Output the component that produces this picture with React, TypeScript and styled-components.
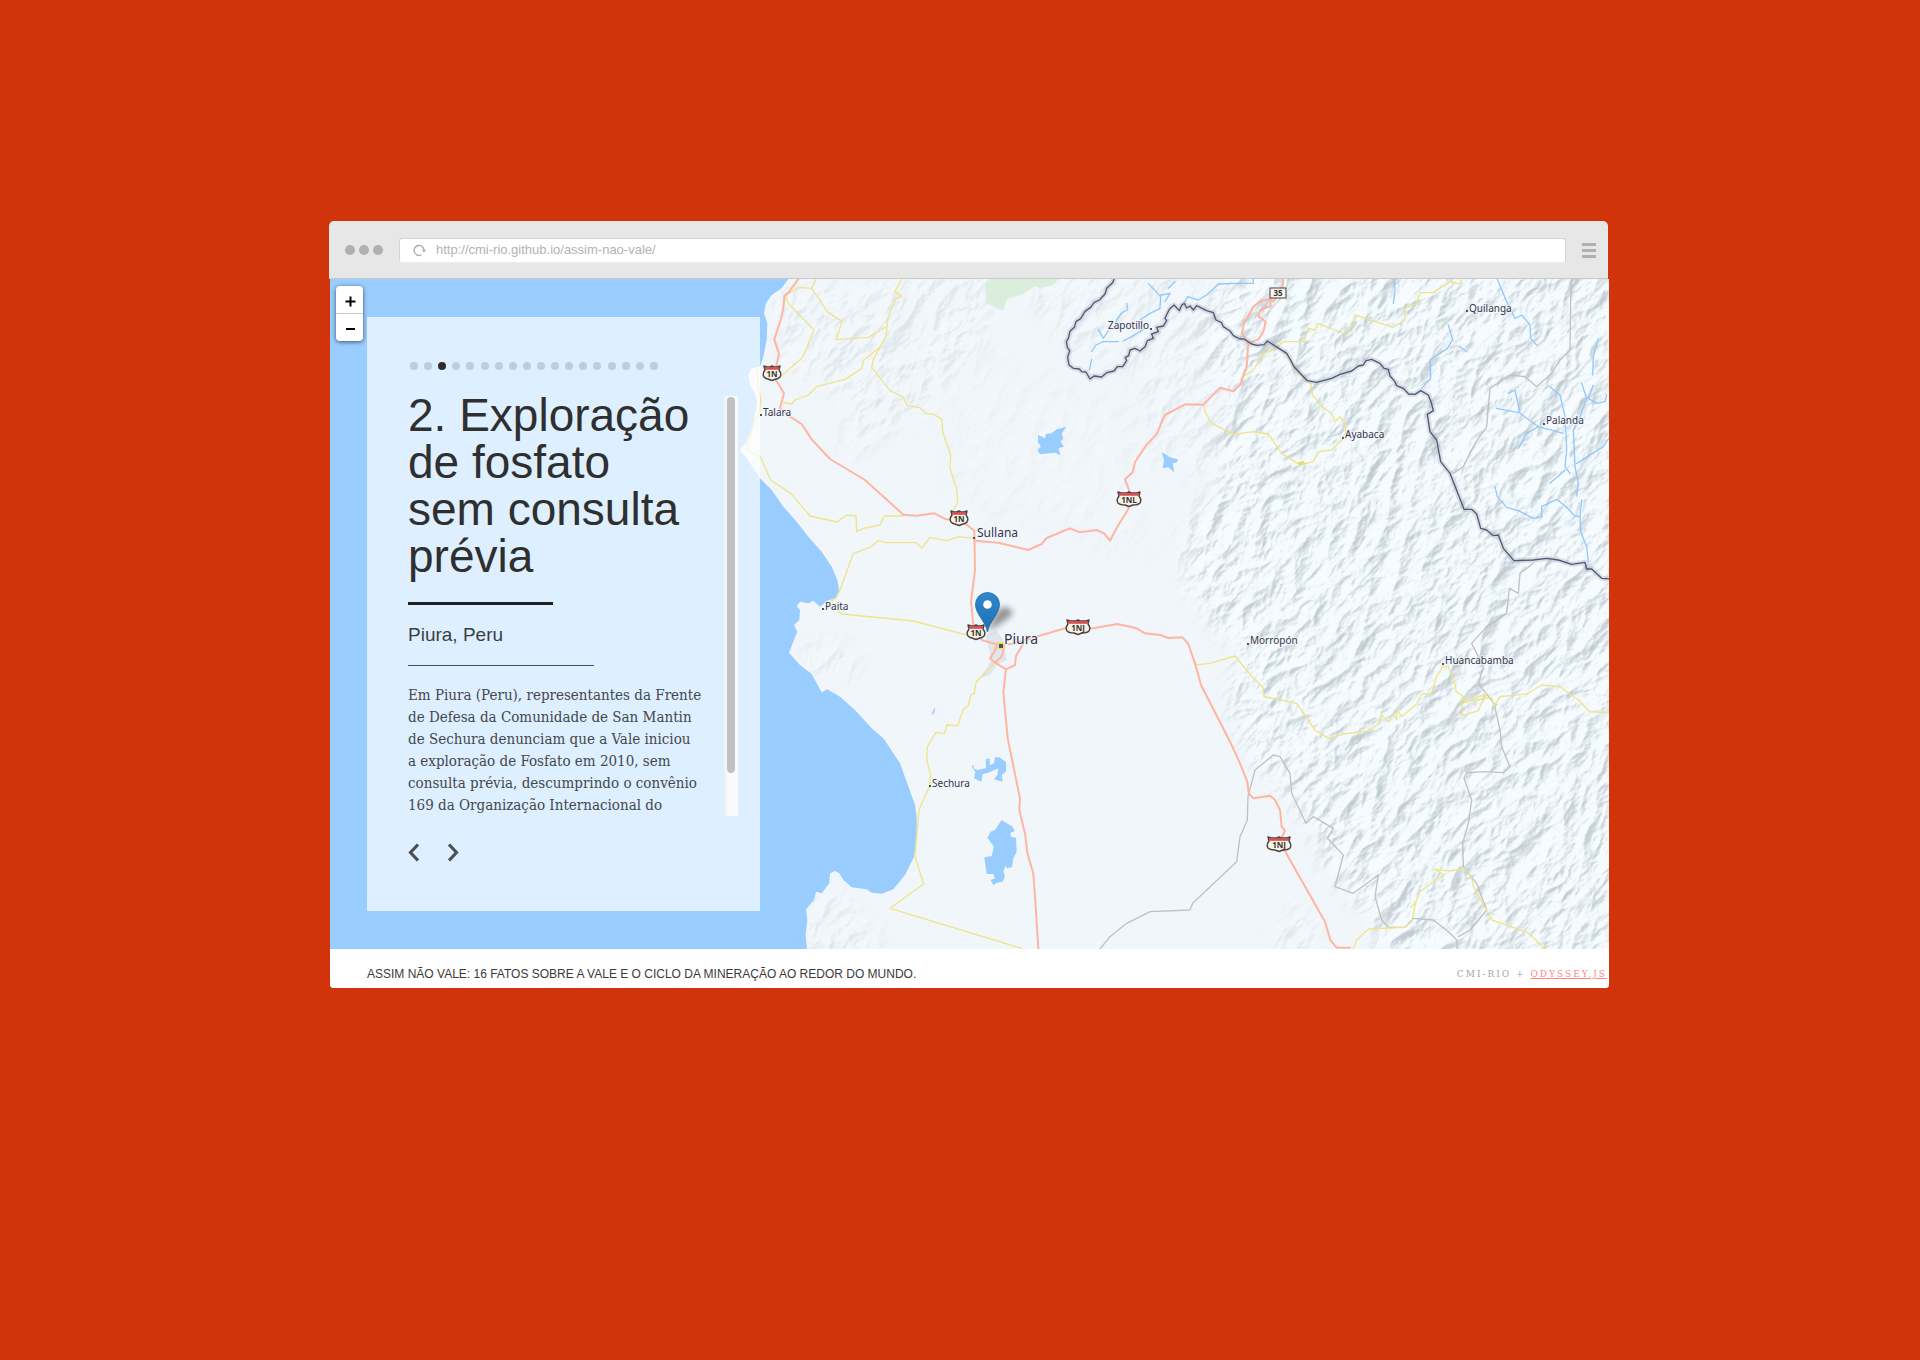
import React from "react";
import styled, { createGlobalStyle } from "styled-components";

const sans = `"Liberation Sans", Arial, Helvetica, sans-serif`;
const slab = `"DejaVu Serif Condensed", "DejaVu Serif", serif`;

const GlobalStyle = createGlobalStyle`
  * { box-sizing: border-box; }
  body { margin: 0; background: #d1330a; font-family: ${sans}; }
  button { padding: 0; border: 0; background: none; cursor: pointer; }
`;

const Stage = styled.main`
  min-height: 100vh;
  padding: 221px 311px 0 329px;
  background: #d1330a;
`;

const Browser = styled.section`
  display: flex;
  flex-direction: column;
`;

const Toolbar = styled.header`
  display: flex;
  align-items: center;
  gap: 16px;
  height: 58px;
  margin-right: 1px;
  padding: 1px 12px 0 16px;
  background: #e7e7e7;
  border-bottom: 1px solid #c9c9c9;
  border-radius: 5px 5px 0 0;
`;

const WindowDots = styled.div`
  display: flex;
  gap: 4px;
`;

const WindowDot = styled.span`
  width: 10px;
  height: 10px;
  border-radius: 50%;
  background: #b0b0b0;
`;

const AddressBar = styled.form`
  display: flex;
  flex: 1;
  align-items: center;
  gap: 10px;
  height: 25px;
  padding: 0 13px;
  background: #fff;
  border: 1px solid #d4d4d4;
  border-bottom-color: #ececec;
  border-radius: 3px;
`;

const IconButton = styled.button`
  display: flex;
  flex: none;
`;

const AddressInput = styled.input`
  flex: 1;
  min-width: 0;
  padding: 0;
  border: 0;
  outline: 0;
  background: none;
  color: #b2b2b2;
  font: 13px/20px ${sans};
`;

const Page = styled.div`
  margin-left: 1px;
  overflow: hidden;
  border-radius: 0 0 4px 4px;
  background: #fff;
`;

const MapArea = styled.div`
  position: relative;
  display: flex;
  padding: 38px 0 38px 37px;
  background: #99ccff;
`;

const MapCanvas = styled.svg`
  position: absolute;
  inset: 0;
  width: 100%;
  height: 100%;
`;

const PlaceName = styled.text<{ $size: number }>`
  font-family: "Noto Sans", "Open Sans", sans-serif;
  font-size: ${(p) => p.$size}px;
  fill: #34344e;
  stroke: #f4f8fb;
  stroke-opacity: 0.8;
  stroke-width: 2px;
  paint-order: stroke;
`;

const ShieldText = styled.text`
  font: bold 8px "Open Sans", sans-serif;
  fill: #3a3533;
  text-anchor: middle;
`;

const ZoomControl = styled.div`
  position: absolute;
  top: 7px;
  left: 6px;
  display: flex;
  flex-direction: column;
  width: 27px;
  overflow: hidden;
  border-radius: 4px;
  background: #fff;
  box-shadow: 0 1px 4px rgba(0, 0, 0, 0.6);
`;

const ZoomButton = styled.button`
  display: flex;
  align-items: center;
  justify-content: center;
  height: 27px;
  padding: 4px 0 0 2px;
  & + & {
    height: 28px;
    padding-top: 2px;
    border-top: 1px solid #ccc;
  }
`;

const Card = styled.article`
  position: relative;
  display: flex;
  flex-direction: column;
  width: 393px;
  padding: 45px 22px 49px 41px;
  background: rgba(255, 255, 255, 0.68);
`;

const Steps = styled.nav`
  display: flex;
  justify-content: space-between;
  width: 248px;
  margin-left: 2px;
`;

const Step = styled.button<{ $active: boolean }>`
  width: 8px;
  height: 8px;
  border-radius: 50%;
  background: ${(p) => (p.$active ? "#2d2b2b" : "#bdcddc")};
`;

const Reader = styled.div`
  display: flex;
  align-items: flex-end;
  justify-content: space-between;
  height: 430px;
  margin: 16px 0 27px;
`;

const Story = styled.div`
  width: 306px;
  height: 100%;
  padding-top: 6px;
  overflow: hidden;
  color: #2f2f2f;
`;

const Title = styled.h1`
  margin: 0 0 22px;
  font: 46px/47px ${sans};
`;

const Line = styled.span`
  display: block;
  white-space: nowrap;
`;

const Rule = styled.hr<{ $width: number; $weight: number; $tone: string }>`
  width: ${(p) => p.$width}px;
  height: ${(p) => p.$weight}px;
  margin: 0;
  border: 0;
  background: ${(p) => p.$tone};
`;

const Place = styled.h2`
  margin: 19px 0;
  color: #3c3f42;
  font: 19px/22px ${sans};
`;

const Body = styled.p`
  margin: 18px 0 0;
  color: #44484c;
  font: 15px/22px ${slab};
`;

const ScrollTrack = styled.div`
  display: flex;
  justify-content: center;
  width: 14px;
  height: 420px;
  padding: 1px 0;
  background: linear-gradient(90deg, #efefef, #fafafa 30%, #fafafa);
`;

const ScrollThumb = styled.div`
  width: 8px;
  height: 376px;
  border-radius: 4px;
  background: #c1c1c1;
`;

const Pager = styled.nav`
  display: flex;
  gap: 27px;
`;

const Footer = styled.footer`
  display: flex;
  align-items: center;
  justify-content: space-between;
  height: 39px;
  padding: 10px 2px 0 37px;
  background: #fff;
  color: #3a3a3a;
  font: 12px/18px ${sans};
`;

const Credits = styled.p`
  margin: 0;
  color: #a5a5a5;
  font: 10px/14px ${slab};
  letter-spacing: 2px;
`;

const CreditLink = styled.a`
  color: #ff8484;
  text-decoration: underline;
`;

/* Map geometry is drawn on a grid three times finer than the screen. */
const LAND =
  "M150 20L125 55L95 75L78 100L72 130L82 160L80 210L70 260L60 290L35 295L25 315L30 345L45 370L52 400L45 430L40 470L20 515L0 540L20 565L60 625L95 660L130 710L170 755L205 800L245 845L275 890L292 930L298 965L285 985L262 992L240 1010L220 992L205 1000L180 995L170 1008L180 1020L178 1050L162 1065L172 1085L147 1148L180 1185L215 1212L245 1267L262 1258L300 1280L345 1320L395 1375L430 1405L480 1480L500 1535L525 1605L530 1640L530 1690L522 1760L495 1815L460 1858L425 1871L395 1868L380 1858L335 1852L310 1830L298 1810L285 1803L270 1810L268 1840L245 1870L228 1865L222 1890L198 1918L202 1950L197 1995L202 2045H2630V20Z";

const LAKES = [
  "M895 495L915 505L918 492L935 490L950 478L980 470L965 490L970 505L962 515L972 530L955 535L962 555L945 548L900 553L892 540L903 530L893 515Z",
  "M1265 546L1290 562L1313 568L1312 576L1298 580L1303 607L1285 592L1268 595L1272 570Z",
  "M695 1490L703 1483L700 1495L712 1500L738 1495L737 1468L748 1465L750 1485L762 1480L765 1462L778 1462L798 1476L798 1505L785 1515L788 1535L762 1528L772 1515L775 1495L745 1508L728 1512L724 1535L702 1525L706 1505Z",
  "M785 1650L798 1658L818 1670L824 1684L812 1688L812 1700L828 1703L830 1745L820 1765L816 1792L800 1795L797 1785L790 1805L795 1818L788 1835L770 1838L760 1845L752 1830L765 1825L760 1812L740 1812L733 1762L755 1758L762 1730L742 1703L752 1685L765 1680Z",
  "M574 1337L580 1320L586 1312L583 1328Z",
];

const HIGHWAYS = [
  "M175 27L150 62L133 78L130 115L122 150L103 208L117 252L102 320L132 370L120 415L150 440L185 462L215 508L270 567L375 630L490 734L530 737L583 730L618 748L665 752L703 782L705 900L693 995L700 1065L725 1110L770 1123L815 1122L975 1075L1060 1075L1132 1062L1190 1075L1215 1090L1260 1095L1285 1104L1328 1102L1345 1122L1365 1180L1383 1245L1475 1425L1500 1480L1522 1535L1526 1570L1540 1585L1590 1577L1605 1590L1620 1620L1625 1670L1635 1682L1620 1715L1650 1770L1755 1955L1772 2012L1790 2033L1830 2033",
  "M705 812L775 818L865 840L905 822L920 804L990 775L1020 787L1070 780L1092 790L1110 812L1132 770L1165 718L1167 660L1155 628L1178 607L1185 577L1215 530L1250 492L1275 435L1335 403L1390 404L1440 353L1480 364L1500 345L1520 290L1525 220L1506 190L1512 160L1540 110L1562 92L1590 88L1592 108L1560 120L1555 138L1577 155L1570 185L1555 208L1530 218",
  "M1630 27L1626 65L1600 95L1588 88",
  "M770 1123L765 1142L750 1165L765 1178L798 1198L790 1265L803 1405L840 1585L838 1620L856 1695L862 1750L880 1810L886 1895L895 2037",
  "M798 1198L825 1185L828 1158L848 1125M765 1178L785 1160L793 1130L775 1118",
];

const ROADS = [
  "M228 27L215 55L175 52L135 78L145 100L222 180L188 262L128 315",
  "M215 55L262 125L306 155L288 209L385 202L435 172",
  "M485 27L465 65L487 80L468 85L443 145L438 200L400 268L395 292L450 362L488 380L502 407L540 413L560 432L580 432L606 448L608 485L632 555L630 595L650 658L653 700L640 718",
  "M420 230L370 272L366 295L315 328L230 350L205 375L165 390L155 402L130 397",
  "M50 295L55 350L62 385L58 430L40 460L20 540L62 562L92 630L152 670L210 738L290 756L320 735L348 738L350 785L370 775L420 765L432 738L490 738",
  "M705 805L655 800L620 812L570 802L545 835L530 818L440 818L415 812L390 832L340 850L302 955L288 985L262 1000",
  "M262 1000L305 1032L520 1053L680 1095",
  "M760 1183L708 1237L703 1270L692 1275L685 1305L668 1322L653 1367L620 1365L614 1391L588 1387L562 1430L560 1470L572 1515L568 1550L537 1620L525 1760L551 1842L450 1915L845 2035",
  "M2165 27L2160 42L2130 35L2080 68L2040 68L2030 100L1995 115L1995 150L1958 172L1845 135L1840 165L1815 192L1735 160L1725 180L1705 175L1690 215L1630 215L1600 238L1570 250L1540 300L1510 320",
  "M1635 245L1665 300L1712 340L1718 375L1745 410L1775 430L1785 455L1800 440L1815 460L1818 485L1805 510L1775 540L1735 545L1720 575L1680 585L1625 550L1585 492L1540 485L1480 493L1415 460L1395 425L1392 405",
  "M1365 1185L1410 1180L1485 1158L1540 1225L1568 1250L1572 1280L1670 1300L1725 1380L1765 1405L1810 1392L1890 1382L1920 1355L1925 1335L1945 1355L1960 1335L1970 1348L1970 1318L1985 1340L2030 1302L2045 1272L2075 1270L2090 1220L2108 1190L2125 1190L2145 1240L2148 1265L2165 1275L2175 1298L2240 1270L2225 1300L2215 1322L2168 1337L2162 1290L2200 1292L2255 1282L2262 1310L2280 1280L2360 1272L2405 1245L2460 1250L2515 1290L2550 1325L2610 1328",
  "M2172 1795L2130 1803L2085 1798L2110 1815L2080 1835L2040 1865L2025 1900L2013 1912L2028 1895L2015 1955L1995 1972L1885 1977L1850 2010L1838 2040",
  "M2172 1795L2195 1820L2200 1850L2225 1895L2255 1950L2365 1988L2415 2037",
];

const REGION_LINES = [
  "M1080 2037L1110 2000L1160 1960L1230 1925L1350 1920L1358 1900L1490 1775L1500 1700L1522 1650L1524 1580L1545 1500L1600 1455L1620 1460L1650 1510L1655 1570L1698 1660L1720 1640L1780 1675L1762 1705L1810 1755L1785 1850L1840 1870L1915 1815L1905 1880L1925 1950L1945 1972L1995 1972L2020 1945L2080 1950L2125 1985L2150 2010L2152 2040",
  "M2495 27L2492 90L2490 240L2460 270L2435 310L2390 350L2355 320L2310 315L2250 355L2240 470L2205 520L2170 590L2140 610",
  "M2380 880L2340 910L2335 970L2308 955L2300 1030L2240 1070L2195 1120L2230 1190L2215 1240L2262 1300L2280 1380L2285 1430L2310 1490L2290 1508L2235 1505L2180 1508L2172 1525L2195 1590L2185 1660L2168 1720L2170 1790L2210 1840L2240 1920L2190 1980L2155 2000",
];

const BORDER =
  "M1125 20L1118 38L1100 55L1095 72L1078 90L1062 98L1052 112L1035 124L1022 146L1008 155L1003 172L990 184L985 205L979 215L982 232L989 242L983 262L987 285L1000 295L1018 297L1025 305L1038 306L1050 327L1062 318L1085 321L1100 308L1122 303L1132 290L1148 290L1160 272L1156 262L1166 257L1170 240L1185 235L1200 243L1215 230L1222 212L1240 205L1235 192L1255 185L1250 172L1270 168L1280 152L1275 145L1288 118L1302 105L1318 122L1325 106L1333 100L1340 114L1350 108L1360 120L1370 107L1400 122L1420 128L1428 150L1445 158L1450 170L1470 183L1480 197L1500 207L1512 207L1535 222L1552 226L1572 224L1582 213L1612 232L1640 250L1652 270L1662 290L1702 332L1730 337L1775 325L1800 313L1835 303L1855 288L1870 285L1878 272L1895 268L1920 280L1932 295L1945 298L1950 318L1965 335L1970 347L1990 355L2006 372L2025 373L2042 362L2065 375L2073 395L2080 422L2062 433L2070 485L2090 510L2102 575L2130 610L2172 718L2195 718L2210 732L2222 775L2240 780L2260 797L2275 795L2290 835L2322 872L2380 870L2420 865L2455 870L2495 883L2535 877L2540 897L2555 897L2585 925L2620 927";

const RIVERS = [
  "M1160 100L1163 120L1145 128L1130 150L1125 170M1075 178L1090 205L1105 182M1055 245L1068 225L1090 215L1135 215M1150 213L1175 200L1215 175L1200 150L1230 130L1260 115L1262 80L1225 40M1262 75L1290 70L1275 95M1055 268L1048 300",
  "M1285 55L1305 35M1335 95L1342 80L1375 90L1400 75L1435 42L1490 40L1540 40L1540 28",
  "M1962 27L1965 60L1960 100M2272 27L2300 95L2325 145L2345 135L2370 165L2372 205L2390 225M2125 165L2138 210L2122 235L2070 270L2072 325L2045 355M2160 230L2180 245",
  "M2575 205L2560 260L2558 315M2600 375L2595 395L2570 400L2545 385L2560 345M2525 340L2540 385L2520 440L2500 480L2505 590L2515 640L2510 678M2430 350L2460 375L2475 440L2478 490L2480 540L2475 590L2490 610M2305 370L2325 360L2340 430L2395 470L2470 490M2270 415L2335 428M2395 470L2360 490L2335 535M2610 500L2590 530L2510 580M2475 600L2430 640",
  "M2265 650L2272 680L2300 712L2335 722L2380 745L2405 740L2405 710L2450 688L2480 712L2505 738L2520 740L2525 690M2520 740L2522 785L2540 830L2545 875",
];

const PLACES = [
  { name: "Talara", x: 763, y: 416, size: 10, dotX: 761, dotY: 415 },
  { name: "Sullana", x: 977, y: 537, size: 12, dotX: 974, dotY: 538 },
  { name: "Paita", x: 825, y: 610, size: 10, dotX: 823, dotY: 609 },
  { name: "Piura", x: 1004, y: 644, size: 14, dotX: 1000, dotY: 645 },
  { name: "Sechura", x: 932, y: 787, size: 10, dotX: 930, dotY: 786 },
  { name: "Zapotillo", x: 1108, y: 329, size: 10, dotX: 1151, dotY: 329 },
  { name: "Quilanga", x: 1469, y: 312, size: 10, dotX: 1467, dotY: 311 },
  { name: "Ayabaca", x: 1345, y: 438, size: 10, dotX: 1343, dotY: 438 },
  { name: "Palanda", x: 1546, y: 424, size: 10, dotX: 1544, dotY: 424 },
  { name: "Morropón", x: 1250, y: 644, size: 10, dotX: 1248, dotY: 644 },
  { name: "Huancabamba", x: 1445, y: 664, size: 10, dotX: 1443, dotY: 664 },
];

const SHIELDS = [
  { code: "1N", x: 772, y: 373, half: 9 },
  { code: "1N", x: 959, y: 518, half: 9 },
  { code: "1N", x: 976, y: 632, half: 9 },
  { code: "1NL", x: 1129, y: 499, half: 12 },
  { code: "1NJ", x: 1078, y: 627, half: 12 },
  { code: "1NJ", x: 1279, y: 844, half: 12 },
];

function Shield({ code, x, y, half }: { code: string; x: number; y: number; half: number }) {
  const edge = half - 1;
  const outline = `M${-edge} -7L${-edge + 3} -6H-2L0 -7L2 -6H${edge - 3}L${edge} -7L${edge - 1} -3Q${half + 1} 1 ${edge} 4Q${half - 3} 6 4 6L0 7.5L-4 6Q${-half + 3} 6 ${-edge} 4Q${-half - 1} 1 ${-edge + 1} -3Z`;
  return (
    <g transform={`translate(${x} ${y})`}>
      <path d={outline} fill="#f6f2e6" stroke="#4b423d" strokeWidth="1.4" strokeLinejoin="round" />
      <path d={`M${-edge + 1} -6H${edge - 1}V-3.2H${-edge + 1}Z`} fill="#d25052" />
      <ShieldText y="4">{code}</ShieldText>
    </g>
  );
}

function TerrainMap() {
  return (
    <MapCanvas viewBox="330 279 1279 670" preserveAspectRatio="xMidYMid slice" role="img" aria-label="Mapa da região de Piura, Peru">
      <defs>
        <filter id="relief" x="0" y="0" width="100%" height="100%" colorInterpolationFilters="sRGB">
          <feTurbulence type="turbulence" baseFrequency="0.007 0.012" numOctaves="6" seed="7" />
          <feColorMatrix values="0 0 0 0 0  0 0 0 0 0  0 0 0 0 0  -1 0 0 0 1" />
          <feDiffuseLighting surfaceScale="22" diffuseConstant="1.2" lightingColor="#fff">
            <feDistantLight azimuth="262" elevation="50" />
          </feDiffuseLighting>
          <feComponentTransfer>
            <feFuncR type="table" tableValues="0.76 0.80 0.84 0.885 0.93 0.965" />
            <feFuncG type="table" tableValues="0.80 0.84 0.88 0.92 0.96 0.985" />
            <feFuncB type="table" tableValues="0.82 0.86 0.895 0.935 0.975 1" />
          </feComponentTransfer>
        </filter>
        <filter id="feather" x="-20%" y="-20%" width="140%" height="140%">
          <feGaussianBlur stdDeviation="34" />
        </filter>
        <filter id="pinShade" x="-50%" y="-50%" width="200%" height="200%">
          <feGaussianBlur stdDeviation="3" />
        </filter>
        <linearGradient id="pinFill" x1="0" y1="0" x2="0" y2="1">
          <stop offset="0" stopColor="#2f88cb" />
          <stop offset="1" stopColor="#1f6fb0" />
        </linearGradient>
        <clipPath id="landClip">
          <path d={LAND} />
        </clipPath>
        <mask id="hills" maskUnits="userSpaceOnUse" x="-100" y="0" width="2800" height="2100">
          <g filter="url(#feather)">
            <path d="M1500 -60H2760V2160H1980L1880 1920L1760 1790L1700 1640L1500 1420L1470 1290L1500 1150L1330 950L1340 780L1440 640L1430 480L1500 380L1380 240Z" fill="#fff" />
            <path d="M760 -40H1520V500L1380 640L1240 560L1180 300L960 230Z" fill="#fff" opacity=".32" />
            <path d="M90 60L460 30L760 -20L740 220L600 330L560 420L340 560L290 520L340 380L130 300Z" fill="#fff" opacity=".4" />
            <path d="M215 1880L290 1850L420 2000V2100H190ZM1600 1960L1700 1890L1760 2100H1600ZM160 1120L360 1130L350 1240L220 1200Z" fill="#fff" opacity=".4" />
            <path d="M620 200L1200 400L1250 900L600 700Z" fill="#fff" opacity=".1" />
          </g>
        </mask>
      </defs>

      <g transform="translate(740 270) scale(.333333)" fill="none" strokeLinejoin="round" strokeLinecap="round">
        <path d={LAND} fill="#f1f6fa" />
        <g clipPath="url(#landClip)">
          <g mask="url(#hills)">
            <g transform="rotate(-48 1300 1000)">
              <rect x="-500" y="-700" width="3600" height="3500" filter="url(#relief)" />
            </g>
          </g>
        </g>
        <path d="M735 40L750 27H955L940 45L900 55L885 48L850 72L800 88L790 122L765 112L738 98Z" fill="#d7edd8" opacity=".9" />
        <path d="M735 1095L770 1082L790 1110L800 1170L770 1185L750 1215L720 1225L755 1170L745 1130Z" fill="#dfe6ee" />

        {LAKES.map((d) => (
          <path key={d} d={d} fill="#99ccff" />
        ))}
        {RIVERS.map((d) => (
          <path key={d} d={d} stroke="#93c8fb" strokeWidth="4" />
        ))}
        {REGION_LINES.map((d) => (
          <path key={d} d={d} stroke="#bfc1c7" strokeWidth="4" />
        ))}
        {ROADS.map((d) => (
          <path key={d} d={d} stroke="#efe48a" strokeWidth="4" />
        ))}
        <path d="M1672 578L1690 572L1695 582L1680 588Z" fill="#e9dc6c" />
        {HIGHWAYS.map((d) => (
          <path key={d} d={d} stroke="#ffb5a2" strokeWidth="6" />
        ))}
        <path d={BORDER} stroke="#a9afc0" strokeOpacity=".35" strokeWidth="16" />
        <path d={BORDER} stroke="#515874" strokeWidth="4" />
      </g>

      <rect x="997" y="642" width="7" height="7" fill="#eadf6a" />
      {PLACES.map((p) => (
        <g key={p.name}>
          <rect x={p.dotX - 1} y={p.dotY - 1} width={p.size > 12 ? 4 : 2} height={p.size > 12 ? 4 : 2} fill="#4a5068" />
          <PlaceName x={p.x} y={p.y} $size={p.size}>
            {p.name}
          </PlaceName>
        </g>
      ))}

      {SHIELDS.map((s) => (
        <Shield key={`${s.x}-${s.y}`} {...s} />
      ))}
      <g transform="translate(1278 293)">
        <rect x="-8" y="-5" width="16" height="10" fill="#f8f6ee" stroke="#4b423d" />
        <ShieldText y="3">35</ShieldText>
      </g>

      <path d="M988 632L1010 617Q1016 608 1004 607Q994 610 988 632Z" fill="#000" opacity=".4" filter="url(#pinShade)" />
      <path d="M987.500 632C986 622 975.500 614 975.500 604.500A12 12 0 0 1 999.500 604.500C999.500 614 989 622 987.500 632Z" fill="url(#pinFill)" stroke="#1c6aa8" strokeWidth=".8" />
      <circle cx="987.500" cy="604.500" r="4.300" fill="#fff" />
    </MapCanvas>
  );
}

const STEP_COUNT = 18;
const TITLE = ["2. Exploração", "de fosfato", "sem consulta", "prévia"];
const BODY = [
  "Em Piura (Peru), representantes da Frente",
  "de Defesa da Comunidade de San Mantin",
  "de Sechura denunciam que a Vale iniciou",
  "a exploração de Fosfato em 2010, sem",
  "consulta prévia, descumprindo o convênio",
  "169 da Organização Internacional do",
];

export default function App() {
  return (
    <>
      <GlobalStyle />
      <Stage>
        <Browser>
          <Toolbar>
            <WindowDots>
              <WindowDot />
              <WindowDot />
              <WindowDot />
            </WindowDots>
            <AddressBar onSubmit={(e) => e.preventDefault()}>
              <IconButton type="button" aria-label="Recarregar">
                <svg width="13" height="13" viewBox="0 0 13 13" fill="none" stroke="#ababab" strokeWidth="1.3">
                  <path d="M8.500 10.800A5 5 0 1 1 11 6.800" />
                  <path d="M8.800 5.800H13L11 8.600Z" fill="#ababab" stroke="none" />
                </svg>
              </IconButton>
              <AddressInput aria-label="Endereço" defaultValue="http://cmi-rio.github.io/assim-nao-vale/" />
            </AddressBar>
            <IconButton type="button" aria-label="Menu">
              <svg width="14" height="15" viewBox="0 0 14 15" fill="#b0b0b0">
                <path d="M0 0H14V3H0ZM0 6H14V9H0ZM0 12H14V15H0Z" />
              </svg>
            </IconButton>
          </Toolbar>

          <Page>
            <MapArea>
              <TerrainMap />
              <Card>
                <Steps aria-label="Capítulos">
                  {Array.from({ length: STEP_COUNT }, (_, i) => (
                    <Step key={i} $active={i === 2} aria-label={`Capítulo ${i}`} />
                  ))}
                </Steps>
                <Reader>
                  <Story>
                    <Title>
                      {TITLE.map((line) => (
                        <Line key={line}>{line}</Line>
                      ))}
                    </Title>
                    <Rule $width={145} $weight={3} $tone="#222" />
                    <Place>Piura, Peru</Place>
                    <Rule $width={186} $weight={1} $tone="#4c5054" />
                    <Body>
                      {BODY.map((line) => (
                        <Line key={line}>{line}</Line>
                      ))}
                    </Body>
                  </Story>
                  <ScrollTrack>
                    <ScrollThumb />
                  </ScrollTrack>
                </Reader>
                <Pager aria-label="Navegação">
                  <IconButton type="button" aria-label="Anterior">
                    <svg width="12" height="19" viewBox="0 0 12 19" fill="none" stroke="#4d5053" strokeWidth="3.200">
                      <path d="M10 1.500L2.500 9.500L10 17.500" />
                    </svg>
                  </IconButton>
                  <IconButton type="button" aria-label="Próximo">
                    <svg width="12" height="19" viewBox="0 0 12 19" fill="none" stroke="#4d5053" strokeWidth="3.200">
                      <path d="M2 1.500L9.500 9.500L2 17.500" />
                    </svg>
                  </IconButton>
                </Pager>
              </Card>
              <ZoomControl>
                <ZoomButton type="button" aria-label="Aproximar">
                  <svg width="11" height="11" viewBox="0 0 11 11" stroke="#000" strokeWidth="2">
                    <path d="M5.500 0.500V10.500M0.500 5.500H10.500" />
                  </svg>
                </ZoomButton>
                <ZoomButton type="button" aria-label="Afastar">
                  <svg width="11" height="11" viewBox="0 0 11 11" stroke="#000" strokeWidth="2">
                    <path d="M1 6H10" />
                  </svg>
                </ZoomButton>
              </ZoomControl>
            </MapArea>
            <Footer>
              <span>ASSIM NÃO VALE: 16 FATOS SOBRE A VALE E O CICLO DA MINERAÇÃO AO REDOR DO MUNDO.</span>
              <Credits>
                CMI-RIO + <CreditLink href="#odyssey">ODYSSEY.JS</CreditLink>
              </Credits>
            </Footer>
          </Page>
        </Browser>
      </Stage>
    </>
  );
}
